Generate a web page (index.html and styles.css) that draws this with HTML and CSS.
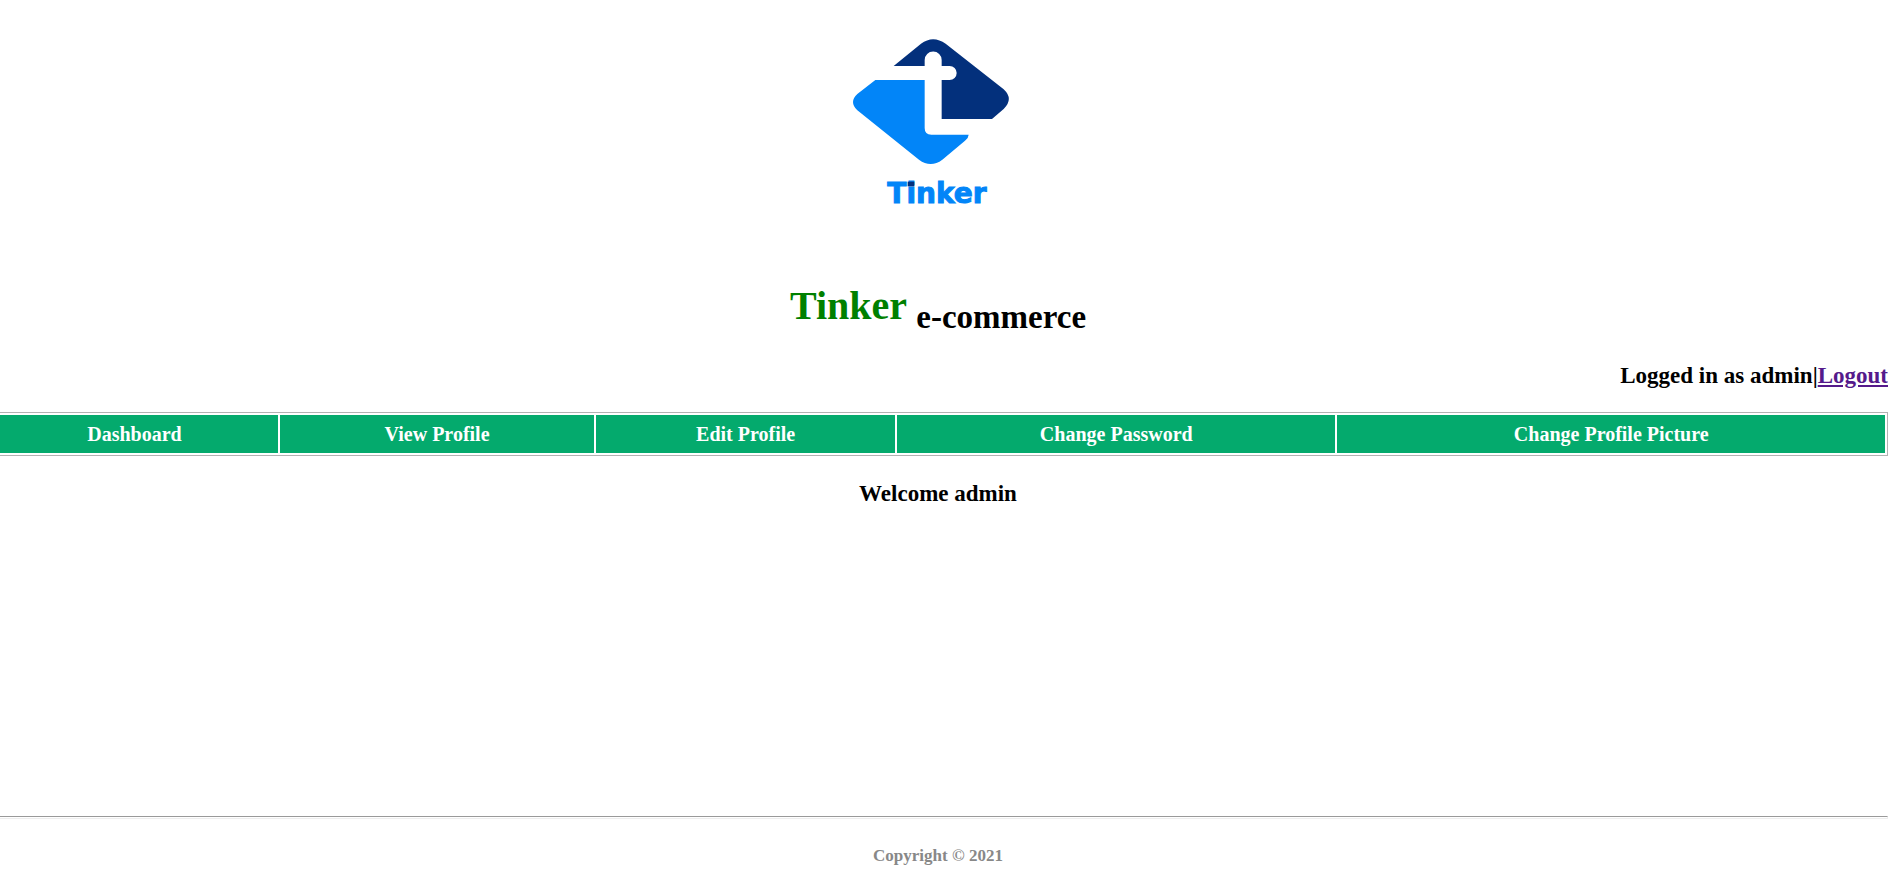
FILE: index.html
```html
<!DOCTYPE html>
<html lang="en">
<head>
<meta charset="utf-8">
<title>Tinker e-commerce</title>
<link rel="stylesheet" href="styles.css">
</head>
<body>
<header class="header">
  <svg class="logo" viewBox="-6 0 600 570" role="img" aria-label="Tinker logo">
    <path fill="#03307c" d="M161 123 L243 56 Q279 29 317 56 L491 193 Q522 222 491 252 L456 282 H305 V165 H329 A21 21 0 0 0 329 123 H305 V105 A25 25 0 0 0 254 105 V123 Z"/>
    <path fill="#0285f8" d="M106 165 H254 V309 Q254 329 274 329 H386 Q386 338 375 347 L307 404 Q272 430 237 404 L52 256 Q26 231 52 207 Z"/>
    <text class="logo-text" x="142" y="535">Tinker</text>
    <rect class="logo-dot" x="203" y="470" width="20" height="14"/>
  </svg>
  <h1 class="title"><span class="brand">Tinker</span> <sub>e-commerce</sub></h1>
</header>
<div class="session">Logged in as admin|<a href="#logout">Logout</a></div>
<nav>
  <table class="menu">
    <tr>
      <th><a href="#dashboard">Dashboard</a></th>
      <th><a href="#view">View Profile</a></th>
      <th><a href="#edit">Edit Profile</a></th>
      <th><a href="#password">Change Password</a></th>
      <th><a href="#picture">Change Profile Picture</a></th>
    </tr>
  </table>
</nav>
<main class="content">
  <h2 class="welcome">Welcome admin</h2>
</main>
<footer class="footer">
  <hr class="rule">
  <p class="copyright">Copyright © 2021</p>
</footer>
</body>
</html>
```
FILE: styles.css
```css
* { box-sizing: border-box; }

body {
  display: flex;
  flex-direction: column;
  min-height: 100vh;
  margin: 0 9px 0 -12px;
  background: #fff;
  color: #000;
  font-family: "Liberation Serif", "Times New Roman", serif;
  font-size: 20px;
  font-weight: bold;
}

.header {
  display: flex;
  flex-direction: column;
  align-items: center;
  gap: 65px;
  padding-top: 25px;
}

.logo {
  width: 200px;
  height: 190px;
}

.logo-text {
  fill: #0285f8;
  stroke: #0285f8;
  stroke-width: 3px;
  font-family: "DejaVu Sans", sans-serif;
  font-size: 84px;
  font-weight: bold;
}

.logo-dot { fill: #03307c; }

.title {
  margin: 0;
  font-size: 40px;
  line-height: 52px;
}

.title sub {
  font-size: 33px;
  line-height: 0;
}

.brand { color: green; }

.session {
  margin: 30px 0 23px;
  font-size: 23px;
  line-height: 27px;
  text-align: right;
}

.session a { color: #551a8b; }

.menu {
  width: 100%;
  border: 1px solid #b2b2b2;
  border-spacing: 2px;
}

.menu th {
  padding: 8px;
  background: #04aa6d;
  line-height: 22px;
}

.menu a {
  color: #fff;
  text-decoration: none;
}

.content { flex: 1; }

.welcome {
  margin: 24px 0;
  font-size: 23px;
  line-height: 27px;
  text-align: center;
}

.rule {
  height: 3px;
  margin: 0;
  border: 1px solid;
  border-color: #9a9a9a #eee #eee #9a9a9a;
}

.copyright {
  margin: 27px 0 13px;
  color: #888;
  font-size: 17px;
  line-height: 19px;
  text-align: center;
}
```
